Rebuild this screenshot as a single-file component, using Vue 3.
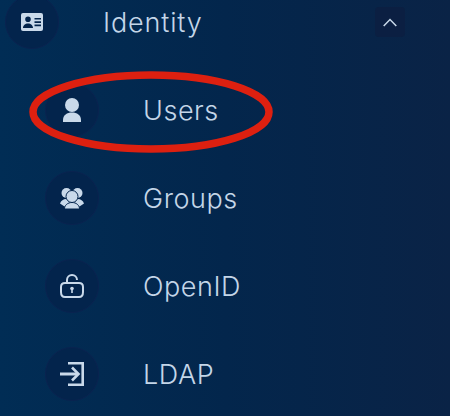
<script setup>
const children = [
  { name: 'Users', icon: 'user' },
  { name: 'Groups', icon: 'groups' },
  { name: 'OpenID', icon: 'lock' },
  { name: 'LDAP', icon: 'login' }
]
</script>

<template>
  <div class="sidebar">
    <div class="menu-row parent">
      <div class="icon-circle">
        <svg width="24" height="18" viewBox="0 0 24 18">
          <path fill="#c9d9ea" fill-rule="evenodd" d="M3 0h18a2 2 0 0 1 2 2v14a2 2 0 0 1-2 2H3a2 2 0 0 1-2-2V2a2 2 0 0 1 2-2zM8 3.500a2.800 2.800 0 1 0 0 5.600A2.800 2.800 0 0 0 8 3.500zM3 15h10c0-2.800-2.200-4.600-5-4.600S3 12.200 3 15zM14.500 5v1.600H21V5zM14.500 8.300v1.600H21V8.300zM14.500 11.600v1.600H21v-1.600z"/>
        </svg>
      </div>
      <span class="label">Identity</span>
      <button class="collapse">
        <svg width="14" height="9" viewBox="0 0 14 9"><path d="M.7 8 7 1.500 13.300 8" fill="none" stroke="#c9d9ea" stroke-width="1.500"/></svg>
      </button>
    </div>

    <div v-for="item in children" :key="item.name" class="menu-row child">
      <div class="icon-circle">
        <svg v-if="item.icon === 'user'" width="20" height="24" viewBox="0 0 20 24">
          <circle cx="10" cy="7" r="7" fill="#c9d9ea"/>
          <path d="M1 22c0-5 4-7.500 9-7.500s9 2.500 9 7.500v2H1z" fill="#c9d9ea"/>
        </svg>
        <svg v-else-if="item.icon === 'groups'" width="24" height="21" viewBox="0 0 24 21">
          <circle cx="6.500" cy="5" r="5" fill="#c9d9ea"/>
          <circle cx="17.500" cy="5" r="5" fill="#c9d9ea"/>
          <path d="M0 15.500c1-3 3.500-4.500 6-4.500h12c2.500 0 5 1.500 6 4.500l-4.500 3h-15z" fill="#c9d9ea"/>
          <circle cx="12" cy="8.500" r="6" fill="#c9d9ea" stroke="#03244c" stroke-width="1"/>
          <path d="M4.500 21c0-3.800 3.200-6.500 7.500-6.500s7.500 2.700 7.500 6.500z" fill="#c9d9ea" stroke="#03244c" stroke-width="1"/>
        </svg>
        <svg v-else-if="item.icon === 'lock'" width="24" height="24" viewBox="0 0 24 24">
          <path d="M7 9V6a5 5 0 0 1 10 0" fill="none" stroke="#c9d9ea" stroke-width="2"/>
          <path d="M5 9h14c2.500 0 4 1.500 4 4v5c0 3-1.500 5-4 5H5c-2.500 0-4-2-4-5v-5c0-2.500 1.500-4 4-4z" fill="none" stroke="#c9d9ea" stroke-width="2"/>
          <circle cx="12" cy="14.500" r="1.800" fill="#c9d9ea"/>
          <rect x="11.200" y="15" width="1.600" height="4" fill="#c9d9ea"/>
        </svg>
        <svg v-else width="24" height="24" viewBox="0 0 24 24">
          <path d="M8 1.300h14.700v21.400H8" fill="none" stroke="#c9d9ea" stroke-width="2.600"/>
          <path d="M0 12h18" fill="none" stroke="#c9d9ea" stroke-width="3"/>
          <path d="M12 5.500l6.500 6.500-6.500 6.500" fill="none" stroke="#c9d9ea" stroke-width="2.600"/>
        </svg>
      </div>
      <span class="label">{{ item.name }}</span>
    </div>

    <!-- hand drawn marker ring over the Users row -->
    <svg class="marker" width="250" height="88" viewBox="0 0 250 88">
      <ellipse cx="125" cy="44" rx="118" ry="37" fill="none" stroke="#dd2010" stroke-width="7.500"/>
    </svg>
  </div>
</template>

<style scoped>
.sidebar {
  position: relative;
  width: 450px;
  height: 416px;
  overflow: hidden;
  background: linear-gradient(90deg, #012d55 0%, #03264c 50%, #0a2346 100%);
  font-family: Inter, "Liberation Sans", sans-serif;
  color: #c4d6e8;
}
.menu-row {
  display: flex;
  align-items: center;
  height: 88px;
}
.parent {
  margin-top: -22px;
  padding-left: 5px;
}
.parent .label {
  letter-spacing: 0.85px;
}
.child {
  padding-left: 45px;
}
.icon-circle {
  width: 54px;
  height: 54px;
  flex: none;
  border-radius: 50%;
  background: #03244c;
  border: 1px solid #0a2350;
  box-sizing: border-box;
  display: flex;
  align-items: center;
  justify-content: center;
}
.label {
  margin-left: 44px;
  font-size: 27px;
  font-weight: 300;
  letter-spacing: 0.55px;
}
.collapse {
  position: absolute;
  left: 375px;
  top: 7px;
  width: 30px;
  height: 30px;
  padding: 0;
  border: none;
  border-radius: 4px;
  background: #0b1f42;
  display: flex;
  align-items: center;
  justify-content: center;
}
.marker {
  position: absolute;
  left: 26px;
  top: 68px;
}
</style>
